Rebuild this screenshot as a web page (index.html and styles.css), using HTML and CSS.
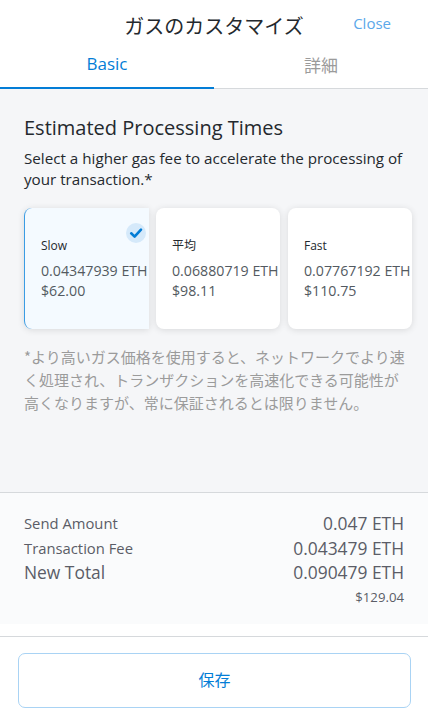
FILE: index.html
```html
<!DOCTYPE html>
<html lang="ja">
<head>
<meta charset="utf-8">
<title>ガスのカスタマイズ</title>
<link rel="stylesheet" href="styles.css">
</head>
<body>
<div class="app">
  <header class="top">
    <span></span>
    <h1 class="title">ガスのカスタマイズ</h1>
    <a class="close">Close</a>
  </header>
  <nav class="tabs">
    <div class="tab active">Basic</div>
    <div class="tab">詳細</div>
  </nav>
  <main class="body">
    <h2 class="heading">Estimated Processing Times</h2>
    <p class="desc">Select a higher gas fee to accelerate the processing of your transaction.*</p>
    <div class="cards">
      <div class="card selected">
        <span class="check">
          <svg width="20" height="20" viewBox="0 0 20 20"><path d="M5.2 10.3 L8.6 13.6 L15 6.6" fill="none" stroke="#037DD6" stroke-width="2.6" stroke-linecap="round" stroke-linejoin="round"/></svg>
        </span>
        <div class="label">Slow</div>
        <div class="val">0.04347939 ETH</div>
        <div class="val">$62.00</div>
      </div>
      <div class="card">
        <div class="label">平均</div>
        <div class="val">0.06880719 ETH</div>
        <div class="val">$98.11</div>
      </div>
      <div class="card">
        <div class="label">Fast</div>
        <div class="val">0.07767192 ETH</div>
        <div class="val">$110.75</div>
      </div>
    </div>
    <p class="note">*より高いガス価格を使用すると、ネットワークでより速く処理され、トランザクションを高速化できる可能性が高くなりますが、常に保証されるとは限りません。</p>
  </main>
  <section class="summary">
    <div class="row"><span class="k">Send Amount</span><span class="v">0.047 ETH</span></div>
    <div class="row"><span class="k">Transaction Fee</span><span class="v">0.043479 ETH</span></div>
    <div class="row total"><span class="k">New Total</span><span class="v">0.090479 ETH</span></div>
    <div class="row usd"><span class="v">$129.04</span></div>
  </section>
  <footer class="foot">
    <button class="save">保存</button>
  </footer>
</div>
</body>
</html>
```
FILE: styles.css
```css
* { box-sizing: border-box; }
html, body { margin: 0; padding: 0; }
body {
  font-family: "Open Sans", "Noto Sans CJK JP", sans-serif;
  color: #24292E;
  background: #fff;
}
.app {
  width: 428px;
  height: 717px;
  display: flex;
  flex-direction: column;
  overflow: hidden;
}
.top {
  height: 45px;
  display: grid;
  grid-template-columns: 1fr auto 1fr;
  align-items: center;
  padding-top: 6px;
}
.title {
  margin: 0;
  font-family: "Noto Sans CJK JP", sans-serif;
  font-weight: 400;
  font-size: 20px;
  line-height: 26px;
  color: #24292E;
}
.close {
  justify-self: end;
  padding-right: 37px;
  margin-top: -6px;
  font-size: 15px;
  color: #5BA8EA;
}
.tabs {
  display: flex;
  height: 44px;
  border-bottom: 1px solid #D6D9DC;
}
.tab {
  flex: 1;
  display: flex;
  align-items: center;
  justify-content: center;
  font-size: 17px;
  color: #9B9B9B;
  padding-bottom: 5px;
}
.tab.active {
  color: #037DD6;
  border-bottom: 2px solid #037DD6;
  margin-bottom: -1px;
}
.body {
  flex: 0 0 403px;
  background: #F5F6F8;
  padding: 27px 17px 0 24px;
}
.heading {
  margin: 0;
  font-size: 20px;
  font-weight: 400;
  line-height: 24px;
  color: #24292E;
}
.desc {
  margin: 8px 0 0;
  font-size: 15.2px;
  line-height: 21px;
  color: #24292E;
}
.cards {
  display: flex;
  gap: 7px;
  margin-top: 18px;
  height: 121px;
}
.card {
  position: relative;
  flex: 0 0 124px;
  background: #fff;
  border-radius: 8px;
  box-shadow: 0 1px 7px rgba(0, 0, 0, 0.12);
  padding: 29px 0 0 16px;
  white-space: nowrap;
}
.card + .card + .card { margin-left: 1px; }
.card.selected {
  flex-basis: 125px;
  background: #F4FAFF;
  border-left: 1px solid #3A9CE4;
  border-radius: 8px 0 0 8px;
  overflow: hidden;
}
.check {
  position: absolute;
  top: 15px;
  right: 3px;
  width: 20px;
  height: 20px;
  border-radius: 50%;
  background: #D5E9FA;
  display: flex;
}
.label {
  font-size: 12px;
  line-height: 17px;
  color: #24292E;
}
.val {
  font-size: 14.2px;
  line-height: 20px;
  color: #535A61;
}
.label + .val { margin-top: 7px; }
.note {
  margin: 16px 0 0;
  font-family: "Noto Sans CJK JP", sans-serif;
  font-size: 15px;
  line-height: 23px;
  color: #9B9B9B;
}
.summary {
  flex: 0 0 132px;
  background: #FAFBFC;
  border-top: 1px solid #D6D9DC;
  padding: 18px 24px 0 24px;
  display: flex;
  flex-direction: column;
}
.row {
  display: flex;
  justify-content: space-between;
  align-items: center;
  height: 24.5px;
  color: #5B5D67;
}
.row .k { font-size: 14.8px; }
.row .v { font-size: 17.4px; }
.row.total .k { font-size: 17.4px; }
.row.usd { justify-content: flex-end; height: 25px; }
.row.usd .v { font-size: 13.2px; }
.foot {
  margin-top: 12px;
  border-top: 1px solid #D6D9DC;
  padding: 16px 17px 0 18px;
}
.save {
  display: block;
  width: 100%;
  height: 55px;
  background: #fff;
  border: 1px solid #A9D3F4;
  border-radius: 7px;
  color: #037DD6;
  font-family: "Noto Sans CJK JP", sans-serif;
  font-size: 16px;
  padding: 0 0 4px;
}
```
